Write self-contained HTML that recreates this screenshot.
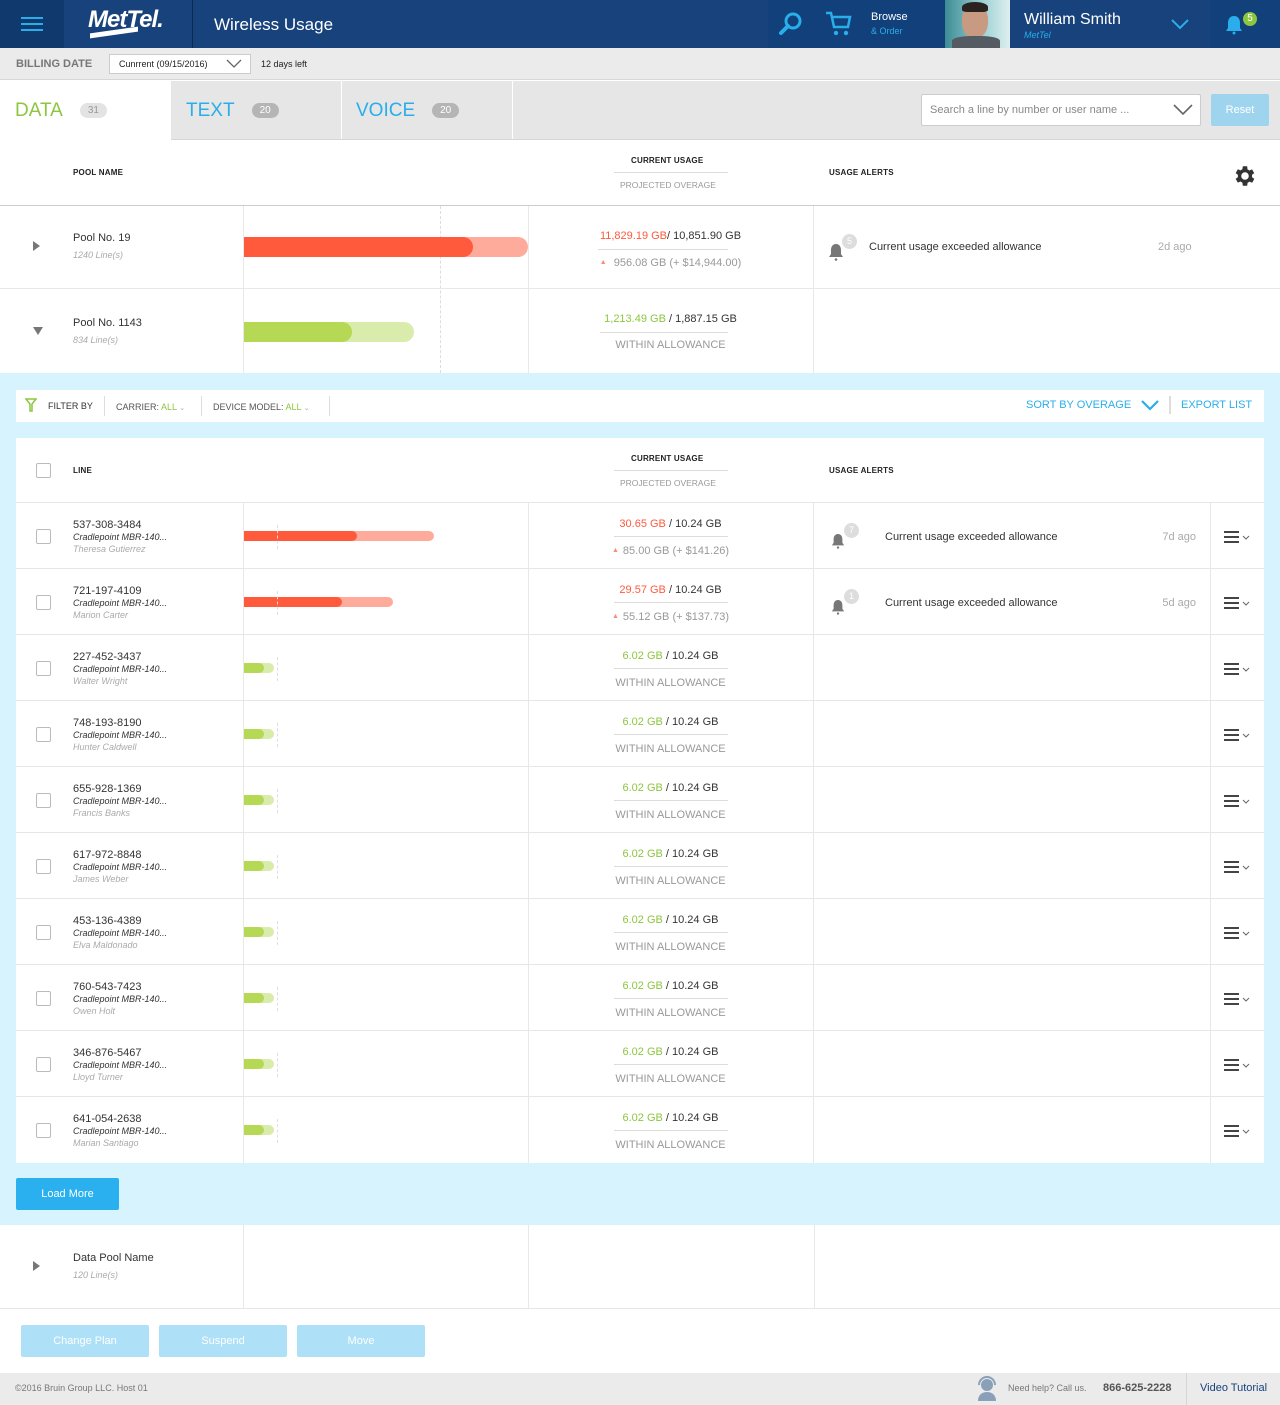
<!DOCTYPE html>
<html><head><meta charset="utf-8">
<style>
*{box-sizing:border-box;margin:0;padding:0}
body{width:1280px;height:1405px;position:relative;background:#fff;font-family:"Liberation Sans",Arial,sans-serif;color:#333;overflow:hidden}
.a{position:absolute}
.hdr{left:0;top:0;width:1280px;height:48px;background:#17427b}
.bd{left:0;top:48px;width:1280px;height:32px;background:#ebebeb;border-bottom:1px solid #d6d6d6}
.tabs{left:0;top:81px;width:1280px;height:59px;background:#e6e6e6;border-bottom:1px solid #d6d6d6}
.pill{display:inline-block;background:#b5b5b5;color:#fff;border-radius:9px;font-size:10px;padding:2px 8px;vertical-align:middle;margin-left:14px;position:relative;top:0}
.hd{font-size:8px;font-weight:bold;color:#222;letter-spacing:.2px}
.vl{background:#e8e8e8;width:1px}
.r{position:absolute;left:16px;width:1248px;height:66px;background:#fff;border-bottom:1px solid #e6e6e6}
.r .cb{position:absolute;left:20px;top:26px;width:15px;height:15px;border:1px solid #bbb;border-radius:2px}
.r .num{position:absolute;left:57px;top:16px;font-size:11px;color:#333}
.r .mod{position:absolute;left:57px;top:29px;font-size:9px;font-style:italic;color:#333}
.r .nm{position:absolute;left:57px;top:41px;font-size:9px;font-style:italic;color:#aaa}
.r .c1,.r .c2,.r .c3{position:absolute;top:0;height:66px;width:1px;background:#e8e8e8}
.r .c1{left:227px}.r .c2{left:512px}.r .c3{left:797px}.r .c4{position:absolute;top:0;height:66px;width:1px;background:#e8e8e8;left:1194px}
.bar{position:absolute;left:228px;top:28px;height:10px}
.bar b{position:absolute;left:0;top:0;height:10px;border-radius:0 5px 5px 0}
.dash{position:absolute;left:261px;top:22px;height:24px;border-left:1px dashed #ddd}
.u1{position:absolute;left:512px;width:285px;text-align:center;top:15px;font-size:11px;color:#333}
.ul{position:absolute;left:598px;width:114px;top:33px;height:1px;background:#ddd}
.u2{position:absolute;left:512px;width:285px;text-align:center;top:42px;font-size:11px;color:#999}
.red{color:#ff5a3c}.grn{color:#8cc63f}
.tri{color:#ff8a78;font-size:7px;position:relative;top:-2px;margin-right:4px}
.bell{position:absolute;left:815px;top:30px}
.badge{position:absolute;left:828px;top:20px;width:15px;height:15px;border-radius:50%;background:#ddd;color:#fff;font-size:9px;text-align:center;line-height:15px}
.al{position:absolute;left:869px;top:28px;font-size:11px;color:#333}
.tm{position:absolute;right:68px;top:28px;font-size:11px;color:#aaa}
.mn{position:absolute;left:1208px;top:27px}
.btn{position:absolute;height:32px;background:#aee0f7;color:#fff;font-size:11px;text-align:center;line-height:32px;border-radius:2px;top:1325px;width:128px}
</style></head><body>

<div class="a hdr"></div>
<div class="a" style="left:0;top:0;width:64px;height:48px;background:#103a6e"></div>
<div class="a" style="left:21px;top:17px;width:22px;height:2px;background:#2aaeeb;box-shadow:0 6px 0 #2aaeeb,0 12px 0 #2aaeeb"></div>
<div class="a" style="left:88px;top:6px;font-size:24px;font-weight:bold;font-style:italic;color:#fff;letter-spacing:-1px">MetTel.</div>
<div class="a" style="left:90px;top:30px;width:48px;height:5px;background:#fff;transform:skewY(-8deg)"></div>
<div class="a" style="left:192px;top:0;width:1px;height:48px;background:#0b2a52"></div>
<div class="a" style="left:214px;top:15px;font-size:17px;color:#fff">Wireless Usage</div>
<div class="a" style="left:768px;top:0;width:177px;height:48px;background:#11407a"></div>
<svg class="a" style="left:778px;top:11px" width="26" height="26" viewBox="0 0 26 26"><circle cx="15" cy="10" r="7" fill="none" stroke="#2aaeeb" stroke-width="3"/><path d="M10 15 L3 22" stroke="#2aaeeb" stroke-width="4" stroke-linecap="round"/></svg>
<svg class="a" style="left:824px;top:10px" width="28" height="28" viewBox="0 0 28 28"><path d="M2 3h5l3 14h14l2-10H9" fill="none" stroke="#2aaeeb" stroke-width="2.5"/><circle cx="12" cy="23" r="2.2" fill="#2aaeeb"/><circle cx="22" cy="23" r="2.2" fill="#2aaeeb"/></svg>
<div class="a" style="left:871px;top:11px;font-size:11px;color:#fff">Browse</div>
<div class="a" style="left:871px;top:26px;font-size:9px;color:#2aaeeb">&amp; Order</div>
<div class="a" style="left:945px;top:0;width:65px;height:48px;background:linear-gradient(90deg,#3d8c95,#9fd3d6 60%,#dfeff0)"></div>
<div class="a" style="left:962px;top:4px;width:26px;height:34px;border-radius:45%;background:#c89a82"></div>
<div class="a" style="left:962px;top:2px;width:26px;height:10px;border-radius:50% 50% 20% 20%;background:#2b2320"></div>
<div class="a" style="left:952px;top:36px;width:48px;height:12px;border-radius:40% 40% 0 0;background:#555b63"></div>
<div class="a" style="left:1024px;top:11px;font-size:16px;color:#fff">William Smith</div>
<div class="a" style="left:1024px;top:30px;font-size:9px;font-style:italic;color:#2aaeeb">MetTel</div>
<svg class="a" style="left:1170px;top:18px" width="20" height="12"><path d="M2 2l8 8 8-8" fill="none" stroke="#2aaeeb" stroke-width="2"/></svg>
<div class="a" style="left:1210px;top:0;width:70px;height:48px;background:#11407a"></div>
<svg class="a" style="left:1225px;top:15px" width="18" height="20" viewBox="0 0 18 20"><path d="M9 1c-4 0-6 3-6 7v5l-2 3h16l-2-3V8c0-4-2-7-6-7z" fill="#2aaeeb"/><circle cx="9" cy="18" r="1.5" fill="#2aaeeb"/></svg>
<div class="a" style="left:1243px;top:12px;width:14px;height:14px;border-radius:50%;background:#8cc63f;color:#fff;font-size:10px;text-align:center;line-height:14px">5</div>

<div class="a bd"></div>
<div class="a" style="left:16px;top:58px;font-size:11px;font-weight:bold;color:#777">BILLING DATE</div>
<div class="a" style="left:109px;top:54px;width:142px;height:20px;background:#fff;border:1px solid #ccc;font-size:9px;padding:4px 9px;color:#222">Cunrrent (09/15/2016)</div>
<svg class="a" style="left:226px;top:59px" width="16" height="10"><path d="M1 1l7 7 7-7" fill="none" stroke="#666" stroke-width="1.3"/></svg>
<div class="a" style="left:261px;top:59px;font-size:9px;color:#222">12 days left</div>

<div class="a tabs"></div>
<div class="a" style="left:0;top:81px;width:171px;height:60px;background:#fff"></div>
<div class="a" style="left:341px;top:81px;width:1px;height:58px;background:#fff"></div>
<div class="a" style="left:512px;top:81px;width:1px;height:58px;background:#fff"></div>
<div class="a" style="left:15px;top:100px;font-size:19px;color:#8cc63f">DATA<span class="pill" style="background:#e3e3e3;color:#999;margin-left:17px">31</span></div>
<div class="a" style="left:186px;top:100px;font-size:19px;color:#2aaeeb">TEXT<span class="pill" style="margin-left:17px">20</span></div>
<div class="a" style="left:356px;top:100px;font-size:19px;color:#2aaeeb">VOICE<span class="pill" style="margin-left:17px">20</span></div>
<div class="a" style="left:921px;top:94px;width:280px;height:32px;background:#fff;border:1px solid #ccc;border-radius:2px;font-size:11px;color:#888;padding:9px 8px">Search a line by number or user name ...</div>
<svg class="a" style="left:1173px;top:104px" width="20" height="12"><path d="M1 1l9 9 9-9" fill="none" stroke="#666" stroke-width="1.6"/></svg>
<div class="a" style="left:1211px;top:94px;width:58px;height:32px;background:#9fd4ee;border-radius:2px;color:#fff;font-size:11px;text-align:center;line-height:32px">Reset</div>

<div class="a hd" style="left:73px;top:168px">POOL NAME</div>
<div class="a hd" style="left:631px;top:156px">CURRENT USAGE</div>
<div class="a" style="left:614px;top:172px;width:114px;height:1px;background:#ddd"></div>
<div class="a" style="left:620px;top:180px;font-size:8.5px;color:#999">PROJECTED OVERAGE</div>
<div class="a hd" style="left:829px;top:168px">USAGE ALERTS</div>
<svg class="a" style="left:1232px;top:163px" width="26" height="26" viewBox="0 0 24 24"><path fill="#333" d="M19.4 13a7.5 7.5 0 000-2l2.1-1.6-2-3.5-2.5 1a7 7 0 00-1.7-1L15 3h-4l-.4 2.8a7 7 0 00-1.7 1l-2.5-1-2 3.5L6.5 11a7.5 7.5 0 000 2l-2.1 1.6 2 3.5 2.5-1a7 7 0 001.7 1L11 21h4l.4-2.8a7 7 0 001.7-1l2.5 1 2-3.5zM13 15.5a3.5 3.5 0 110-7 3.5 3.5 0 010 7z" transform="translate(-1 0)"/></svg>
<div class="a" style="left:0;top:205px;width:1280px;height:1px;background:#ccc"></div>

<div class="a vl" style="left:243px;top:206px;height:167px"></div>
<div class="a vl" style="left:528px;top:206px;height:167px"></div>
<div class="a vl" style="left:813px;top:206px;height:167px"></div>
<div class="a" style="left:440px;top:206px;height:167px;border-left:1px dashed #ddd"></div>
<div class="a" style="left:0;top:288px;width:1280px;height:1px;background:#e8e8e8"></div>
<svg class="a" style="left:33px;top:241px" width="8" height="10"><path d="M0 0l7 5-7 5z" fill="#777"/></svg>
<div class="a" style="left:73px;top:232px;font-size:11px">Pool No. 19</div>
<div class="a" style="left:73px;top:250px;font-size:9px;font-style:italic;color:#aaa">1240 Line(s)</div>
<div class="a" style="left:244px;top:237px;width:284px;height:20px;background:#ffab9b;border-radius:0 10px 10px 0"></div>
<div class="a" style="left:244px;top:237px;width:229px;height:20px;background:#ff5a3c;border-radius:0 10px 10px 0"></div>
<div class="a" style="left:528px;top:230px;width:285px;text-align:center;font-size:11px"><span class="red">11,829.19 GB</span>/ 10,851.90 GB</div>
<div class="a" style="left:598px;top:249px;width:130px;height:1px;background:#ddd"></div>
<div class="a" style="left:528px;top:257px;width:285px;text-align:center;font-size:11px;color:#999"><span class="tri">▲</span> 956.08 GB (+ $14,944.00)</div>
<svg class="a" style="left:828px;top:243px" width="16" height="18" viewBox="0 0 16 18"><path d="M8 1c-3.5 0-5 3-5 6v4l-2 3h14l-2-3V7c0-3-1.5-6-5-6z" fill="#777"/><circle cx="8" cy="16.5" r="1.3" fill="#777"/></svg>
<div class="a" style="left:842px;top:234px;width:15px;height:15px;border-radius:50%;background:#ddd;color:#fff;font-size:9px;text-align:center;line-height:15px">5</div>
<div class="a" style="left:869px;top:241px;font-size:11px">Current usage exceeded allowance</div>
<div class="a" style="left:1158px;top:241px;font-size:11px;color:#aaa">2d ago</div>

<svg class="a" style="left:33px;top:327px" width="10" height="8"><path d="M0 0h10l-5 8z" fill="#777"/></svg>
<div class="a" style="left:73px;top:317px;font-size:11px">Pool No. 1143</div>
<div class="a" style="left:73px;top:335px;font-size:9px;font-style:italic;color:#aaa">834 Line(s)</div>
<div class="a" style="left:244px;top:322px;width:170px;height:20px;background:#d9ecab;border-radius:0 10px 10px 0"></div>
<div class="a" style="left:244px;top:322px;width:108px;height:20px;background:#b5d955;border-radius:0 10px 10px 0"></div>
<div class="a" style="left:528px;top:313px;width:285px;text-align:center;font-size:11px"><span class="grn">1,213.49 GB</span> / 1,887.15 GB</div>
<div class="a" style="left:600px;top:332px;width:128px;height:1px;background:#ddd"></div>
<div class="a" style="left:528px;top:339px;width:285px;text-align:center;font-size:11px;color:#999">WITHIN ALLOWANCE</div>

<div class="a" style="left:0;top:373px;width:1280px;height:852px;background:#d7f3fe"></div>
<div class="a" style="left:16px;top:390px;width:1248px;height:32px;background:#fff"></div>
<svg class="a" style="left:25px;top:398px" width="12" height="14"><path d="M1 1h10L7 6v7H5V6z" fill="none" stroke="#8cc63f" stroke-width="1.5"/></svg>
<div class="a" style="left:48px;top:401px;font-size:9px;color:#333">FILTER BY</div>
<div class="a" style="left:104px;top:396px;width:1px;height:20px;background:#ddd"></div>
<div class="a" style="left:116px;top:402px;font-size:9px;color:#555">CARRIER: <span class="grn">ALL</span> <span style="color:#aaa;font-size:7px">⌄</span></div>
<div class="a" style="left:201px;top:396px;width:1px;height:20px;background:#ddd"></div>
<div class="a" style="left:213px;top:402px;font-size:9px;color:#555">DEVICE MODEL: <span class="grn">ALL</span> <span style="color:#aaa;font-size:7px">⌄</span></div>
<div class="a" style="left:329px;top:396px;width:1px;height:20px;background:#ddd"></div>
<div class="a" style="left:1026px;top:399px;font-size:11px;color:#2aaeeb">SORT BY OVERAGE</div>
<svg class="a" style="left:1140px;top:399px" width="20" height="12"><path d="M2 2l8 8 8-8" fill="none" stroke="#2aaeeb" stroke-width="2.2"/></svg>
<div class="a" style="left:1169px;top:396px;width:2px;height:18px;background:#ddd"></div>
<div class="a" style="left:1181px;top:399px;font-size:11px;color:#2aaeeb">EXPORT LIST</div>

<div class="r" style="top:438px;height:65px">
<i class="cb" style="top:25px"></i>
<div class="hd" style="position:absolute;left:57px;top:28px">LINE</div>
<div class="hd" style="position:absolute;left:615px;top:16px">CURRENT USAGE</div>
<i class="ul" style="top:32px"></i>
<div style="position:absolute;left:604px;top:40px;font-size:8.5px;color:#999">PROJECTED OVERAGE</div>
<div class="hd" style="position:absolute;left:813px;top:28px">USAGE ALERTS</div>
</div>

<div class="r" style="top:503px"><i class="cb"></i><div class="num">537-308-3484</div><div class="mod">Cradlepoint MBR-140...</div><div class="nm">Theresa Gutierrez</div><i class="c1"></i><i class="c2"></i><i class="c3"></i><i class="c4"></i>
<div class="bar"><b style="width:190px;background:#ffab9b"></b><b style="width:113px;background:#ff5a3c"></b></div><i class="dash"></i>
<div class="u1"><span class="red">30.65 GB</span> / 10.24 GB</div><i class="ul"></i><div class="u2"><span class="tri">▲</span>85.00 GB (+ $141.26)</div>
<svg class="bell" width="14" height="16" viewBox="0 0 16 18"><path d="M8 1c-3.5 0-5 3-5 6v4l-2 3h14l-2-3V7c0-3-1.5-6-5-6z" fill="#777"/><circle cx="8" cy="16.5" r="1.3" fill="#777"/></svg><div class="badge">7</div>
<div class="al">Current usage exceeded allowance</div><div class="tm">7d ago</div>
<svg class="mn" width="28" height="14"><path d="M0 2h15M0 7h15M0 12h15" stroke="#444" stroke-width="2"/><path d="M19 6l3 3 3-3" fill="none" stroke="#666"/></svg></div>

<div class="r" style="top:569px"><i class="cb"></i><div class="num">721-197-4109</div><div class="mod">Cradlepoint MBR-140...</div><div class="nm">Marion Carter</div><i class="c1"></i><i class="c2"></i><i class="c3"></i><i class="c4"></i>
<div class="bar"><b style="width:149px;background:#ffab9b"></b><b style="width:98px;background:#ff5a3c"></b></div><i class="dash"></i>
<div class="u1"><span class="red">29.57 GB</span> / 10.24 GB</div><i class="ul"></i><div class="u2"><span class="tri">▲</span>55.12 GB (+ $137.73)</div>
<svg class="bell" width="14" height="16" viewBox="0 0 16 18"><path d="M8 1c-3.5 0-5 3-5 6v4l-2 3h14l-2-3V7c0-3-1.5-6-5-6z" fill="#777"/><circle cx="8" cy="16.5" r="1.3" fill="#777"/></svg><div class="badge">1</div>
<div class="al">Current usage exceeded allowance</div><div class="tm">5d ago</div>
<svg class="mn" width="28" height="14"><path d="M0 2h15M0 7h15M0 12h15" stroke="#444" stroke-width="2"/><path d="M19 6l3 3 3-3" fill="none" stroke="#666"/></svg></div>

<div class="r" style="top:635px"><i class="cb"></i><div class="num">227-452-3437</div><div class="mod">Cradlepoint MBR-140...</div><div class="nm">Walter Wright</div><i class="c1"></i><i class="c2"></i><i class="c3"></i><i class="c4"></i>
<div class="bar"><b style="width:30px;background:#d9ecab"></b><b style="width:20px;background:#b5d955"></b></div><i class="dash"></i>
<div class="u1"><span class="grn">6.02 GB</span> / 10.24 GB</div><i class="ul"></i><div class="u2">WITHIN ALLOWANCE</div>
<svg class="mn" width="28" height="14"><path d="M0 2h15M0 7h15M0 12h15" stroke="#444" stroke-width="2"/><path d="M19 6l3 3 3-3" fill="none" stroke="#666"/></svg></div>

<div class="r" style="top:701px"><i class="cb"></i><div class="num">748-193-8190</div><div class="mod">Cradlepoint MBR-140...</div><div class="nm">Hunter Caldwell</div><i class="c1"></i><i class="c2"></i><i class="c3"></i><i class="c4"></i>
<div class="bar"><b style="width:30px;background:#d9ecab"></b><b style="width:20px;background:#b5d955"></b></div><i class="dash"></i>
<div class="u1"><span class="grn">6.02 GB</span> / 10.24 GB</div><i class="ul"></i><div class="u2">WITHIN ALLOWANCE</div>
<svg class="mn" width="28" height="14"><path d="M0 2h15M0 7h15M0 12h15" stroke="#444" stroke-width="2"/><path d="M19 6l3 3 3-3" fill="none" stroke="#666"/></svg></div>

<div class="r" style="top:767px"><i class="cb"></i><div class="num">655-928-1369</div><div class="mod">Cradlepoint MBR-140...</div><div class="nm">Francis Banks</div><i class="c1"></i><i class="c2"></i><i class="c3"></i><i class="c4"></i>
<div class="bar"><b style="width:30px;background:#d9ecab"></b><b style="width:20px;background:#b5d955"></b></div><i class="dash"></i>
<div class="u1"><span class="grn">6.02 GB</span> / 10.24 GB</div><i class="ul"></i><div class="u2">WITHIN ALLOWANCE</div>
<svg class="mn" width="28" height="14"><path d="M0 2h15M0 7h15M0 12h15" stroke="#444" stroke-width="2"/><path d="M19 6l3 3 3-3" fill="none" stroke="#666"/></svg></div>

<div class="r" style="top:833px"><i class="cb"></i><div class="num">617-972-8848</div><div class="mod">Cradlepoint MBR-140...</div><div class="nm">James Weber</div><i class="c1"></i><i class="c2"></i><i class="c3"></i><i class="c4"></i>
<div class="bar"><b style="width:30px;background:#d9ecab"></b><b style="width:20px;background:#b5d955"></b></div><i class="dash"></i>
<div class="u1"><span class="grn">6.02 GB</span> / 10.24 GB</div><i class="ul"></i><div class="u2">WITHIN ALLOWANCE</div>
<svg class="mn" width="28" height="14"><path d="M0 2h15M0 7h15M0 12h15" stroke="#444" stroke-width="2"/><path d="M19 6l3 3 3-3" fill="none" stroke="#666"/></svg></div>

<div class="r" style="top:899px"><i class="cb"></i><div class="num">453-136-4389</div><div class="mod">Cradlepoint MBR-140...</div><div class="nm">Elva Maldonado</div><i class="c1"></i><i class="c2"></i><i class="c3"></i><i class="c4"></i>
<div class="bar"><b style="width:30px;background:#d9ecab"></b><b style="width:20px;background:#b5d955"></b></div><i class="dash"></i>
<div class="u1"><span class="grn">6.02 GB</span> / 10.24 GB</div><i class="ul"></i><div class="u2">WITHIN ALLOWANCE</div>
<svg class="mn" width="28" height="14"><path d="M0 2h15M0 7h15M0 12h15" stroke="#444" stroke-width="2"/><path d="M19 6l3 3 3-3" fill="none" stroke="#666"/></svg></div>

<div class="r" style="top:965px"><i class="cb"></i><div class="num">760-543-7423</div><div class="mod">Cradlepoint MBR-140...</div><div class="nm">Owen Holt</div><i class="c1"></i><i class="c2"></i><i class="c3"></i><i class="c4"></i>
<div class="bar"><b style="width:30px;background:#d9ecab"></b><b style="width:20px;background:#b5d955"></b></div><i class="dash"></i>
<div class="u1"><span class="grn">6.02 GB</span> / 10.24 GB</div><i class="ul"></i><div class="u2">WITHIN ALLOWANCE</div>
<svg class="mn" width="28" height="14"><path d="M0 2h15M0 7h15M0 12h15" stroke="#444" stroke-width="2"/><path d="M19 6l3 3 3-3" fill="none" stroke="#666"/></svg></div>

<div class="r" style="top:1031px"><i class="cb"></i><div class="num">346-876-5467</div><div class="mod">Cradlepoint MBR-140...</div><div class="nm">Lloyd Turner</div><i class="c1"></i><i class="c2"></i><i class="c3"></i><i class="c4"></i>
<div class="bar"><b style="width:30px;background:#d9ecab"></b><b style="width:20px;background:#b5d955"></b></div><i class="dash"></i>
<div class="u1"><span class="grn">6.02 GB</span> / 10.24 GB</div><i class="ul"></i><div class="u2">WITHIN ALLOWANCE</div>
<svg class="mn" width="28" height="14"><path d="M0 2h15M0 7h15M0 12h15" stroke="#444" stroke-width="2"/><path d="M19 6l3 3 3-3" fill="none" stroke="#666"/></svg></div>

<div class="r" style="top:1097px;border-bottom:none"><i class="cb"></i><div class="num">641-054-2638</div><div class="mod">Cradlepoint MBR-140...</div><div class="nm">Marian Santiago</div><i class="c1"></i><i class="c2"></i><i class="c3"></i><i class="c4"></i>
<div class="bar"><b style="width:30px;background:#d9ecab"></b><b style="width:20px;background:#b5d955"></b></div><i class="dash"></i>
<div class="u1"><span class="grn">6.02 GB</span> / 10.24 GB</div><i class="ul"></i><div class="u2">WITHIN ALLOWANCE</div>
<svg class="mn" width="28" height="14"><path d="M0 2h15M0 7h15M0 12h15" stroke="#444" stroke-width="2"/><path d="M19 6l3 3 3-3" fill="none" stroke="#666"/></svg></div>

<div class="a" style="left:16px;top:1178px;width:103px;height:32px;background:#2ab0ee;border-radius:2px;color:#fff;font-size:11px;text-align:center;line-height:32px">Load More</div>

<div class="a vl" style="left:243px;top:1225px;height:83px"></div>
<div class="a vl" style="left:528px;top:1225px;height:83px"></div>
<div class="a vl" style="left:814px;top:1225px;height:83px"></div>
<div class="a" style="left:0;top:1308px;width:1280px;height:1px;background:#e6e6e6"></div>
<svg class="a" style="left:33px;top:1261px" width="8" height="10"><path d="M0 0l7 5-7 5z" fill="#777"/></svg>
<div class="a" style="left:73px;top:1252px;font-size:11px">Data Pool Name</div>
<div class="a" style="left:73px;top:1270px;font-size:9px;font-style:italic;color:#aaa">120 Line(s)</div>

<div class="btn" style="left:21px;width:128px">Change Plan</div>
<div class="btn" style="left:159px">Suspend</div>
<div class="btn" style="left:297px">Move</div>

<div class="a" style="left:0;top:1373px;width:1280px;height:32px;background:#ebebeb"></div>
<div class="a" style="left:15px;top:1383px;font-size:9px;color:#777">©2016 Bruin Group LLC. Host 01</div>
<svg class="a" style="left:976px;top:1376px" width="22" height="26" viewBox="0 0 22 26"><circle cx="11" cy="9" r="6" fill="#8aa0b8"/><path d="M3 9a8 8 0 0116 0" fill="none" stroke="#8aa0b8" stroke-width="2"/><path d="M2 25c0-6 4-9 9-9s9 3 9 9z" fill="#8aa0b8"/></svg>
<div class="a" style="left:1008px;top:1383px;font-size:9px;color:#777">Need help? Call us.</div>
<div class="a" style="left:1103px;top:1382px;font-size:11px;font-weight:bold;color:#555">866-625-2228</div>
<div class="a" style="left:1186px;top:1373px;width:1px;height:32px;background:#d6d6d6"></div>
<div class="a" style="left:1200px;top:1382px;font-size:11px;color:#17427b">Video Tutorial</div>
</body></html>
